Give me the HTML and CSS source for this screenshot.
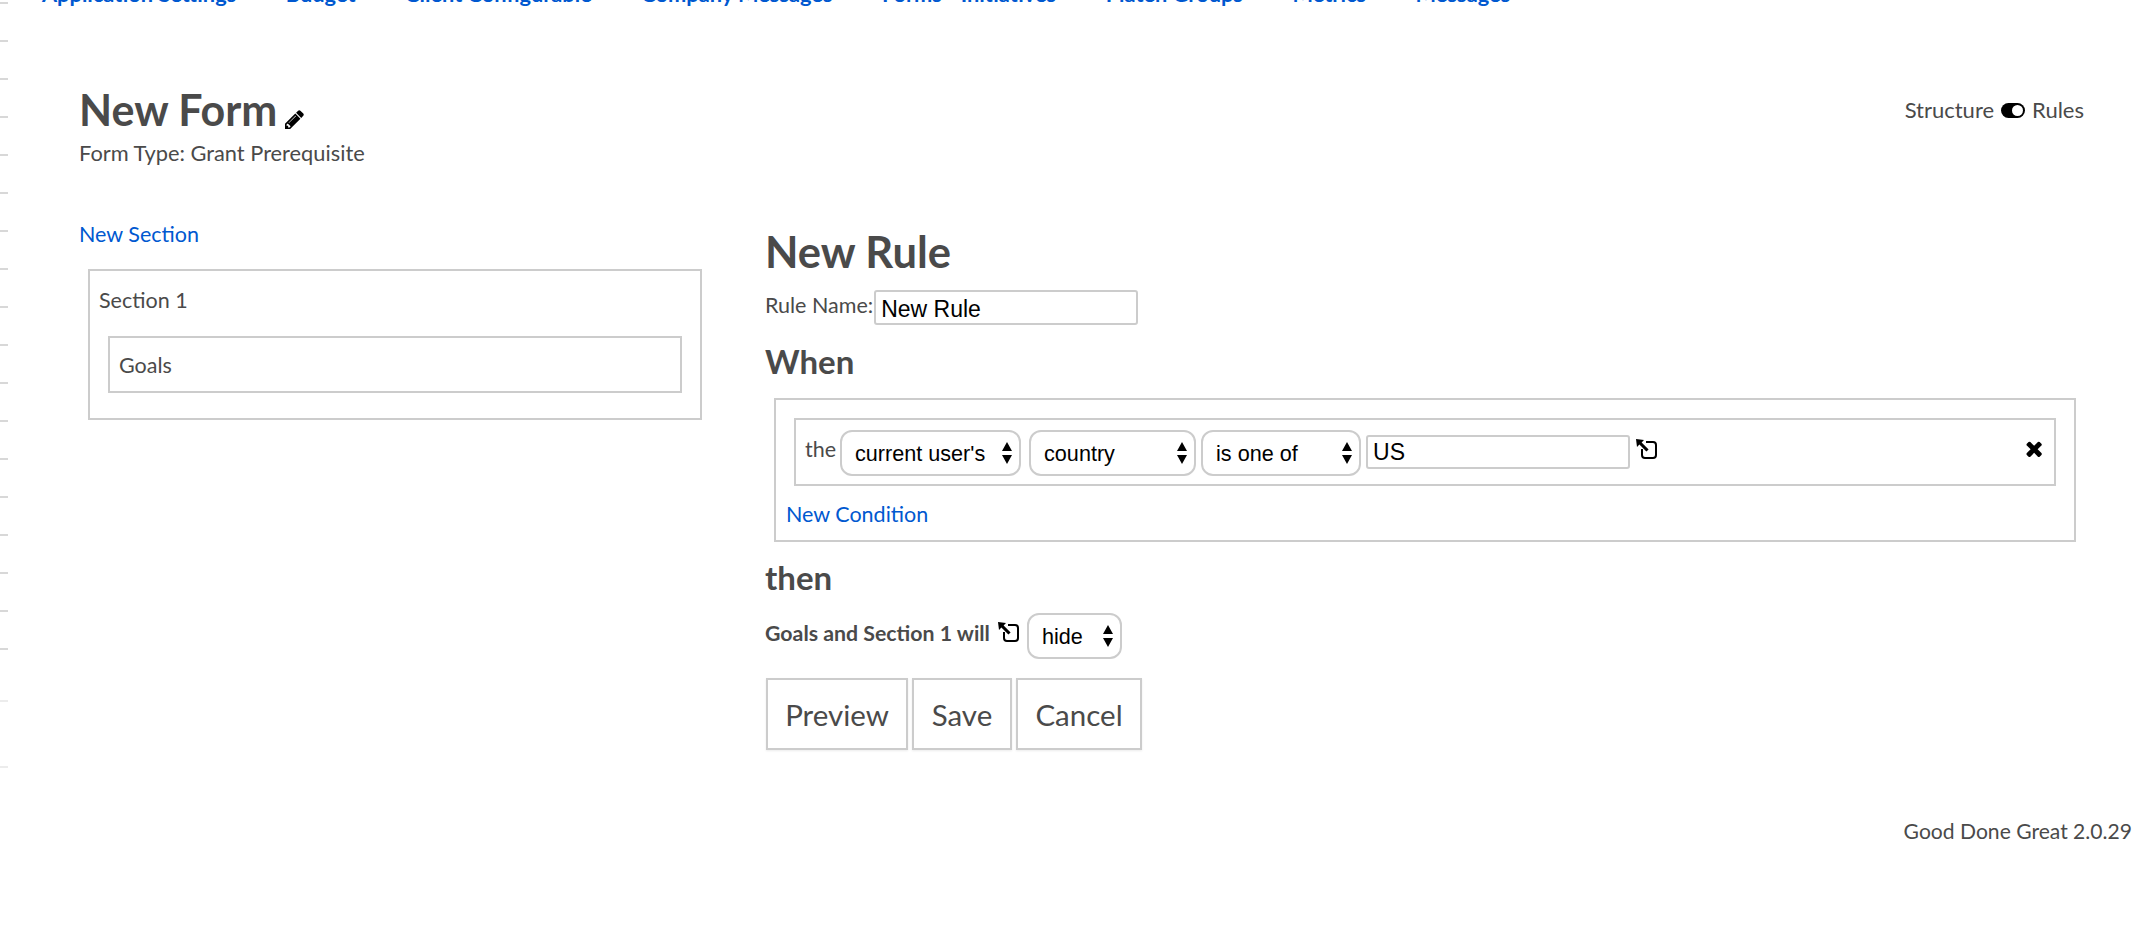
FILE: index.html
```html
<!DOCTYPE html>
<html lang="en">
<head>
    <meta charset="UTF-8">
    <title>New Form</title>
    <link rel="stylesheet" href="styles.css">
</head>
<body>

<div class="page">
    <!-- tick marks down the left edge -->
    <div class="rail">
        <div class="tick"></div><div class="tick"></div><div class="tick"></div><div class="tick"></div>
        <div class="tick"></div><div class="tick"></div><div class="tick"></div><div class="tick"></div>
        <div class="tick"></div><div class="tick"></div><div class="tick"></div><div class="tick"></div>
        <div class="tick"></div><div class="tick"></div><div class="tick"></div><div class="tick"></div>
        <div class="tick"></div>
        <div class="tick tick-last"></div>
        <div class="tick tick-faint"></div>
        <div class="tick tick-faint tick-far"></div>
    </div>

    <div class="main">
        <nav class="nav">
            <a href="#">Application Settings</a>
            <a href="#">Budget</a>
            <a href="#">Client Configurable</a>
            <a href="#">Company Messages</a>
            <a href="#">Forms - Initiatives</a>
            <a href="#">Platen Groups</a>
            <a href="#">Metrics</a>
            <a href="#">Messages</a>
        </nav>

        <header class="form-header">
            <div>
                <h1 class="form-title">New Form
                    <svg class="icon-pencil" viewBox="128 128 1536 1536"><path d="M491 1536l91-91-235-235-91 91v107h128v128h107zm523-928q0-22-22-22-10 0-17 7l-542 542q-7 7-7 17 0 22 22 22 10 0 17-7l542-542q7-7 7-17zm-54-192l416 416-832 832h-416v-416zm683 96q0 53-37 90l-166 166-416-416 166-165q36-38 90-38 53 0 91 38l235 234q37 39 37 91z"/></svg>
                </h1>
                <div class="form-type">Form Type: Grant Prerequisite</div>
            </div>
            <div class="view-toggle">
                <span>Structure</span>
                <svg class="icon-toggle" viewBox="0 0 24 15"><rect width="24" height="15" rx="7.5"/><circle cx="16.5" cy="7.5" r="5.5" fill="#fff"/></svg>
                <span>Rules</span>
            </div>
        </header>

        <div class="columns">
            <aside class="structure">
                <a class="link" href="#">New Section</a>
                <div class="section-box">
                    <div class="section-name">Section 1</div>
                    <div class="question-box">Goals</div>
                </div>
            </aside>

            <section class="rule">
                <h2 class="rule-title">New Rule</h2>
                <div class="rule-name">
                    <label>Rule Name:</label>
                    <input class="text-input name-input" type="text" value="New Rule">
                </div>

                <h3 class="rule-heading when-heading">When</h3>
                <div class="conditions">
                    <div class="condition">
                        <span class="the">the</span>
                        <div class="select-wrap sel-user">
                            <select><option>current user's</option></select>
                            <svg class="arrows" viewBox="0 0 10 22"><path d="M5 0l5 9H0zM5 22l-5-9h10z"/></svg>
                        </div>
                        <div class="select-wrap sel-field">
                            <select><option>country</option></select>
                            <svg class="arrows" viewBox="0 0 10 22"><path d="M5 0l5 9H0zM5 22l-5-9h10z"/></svg>
                        </div>
                        <div class="select-wrap sel-op">
                            <select><option>is one of</option></select>
                            <svg class="arrows" viewBox="0 0 10 22"><path d="M5 0l5 9H0zM5 22l-5-9h10z"/></svg>
                        </div>
                        <input class="text-input value-input" type="text" value="US">
                        <svg class="icon-link" viewBox="0 0 21 20"><path d="M10 3h7a3 3 0 0 1 3 3v10a3 3 0 0 1-3 3H9a3 3 0 0 1-3-3v-6" fill="none" stroke="#000" stroke-width="2"/><path d="M0 0l8 1-2.4 2.4 7 7-2.2 2.2-7-7L1 8z"/></svg>
                        <svg class="icon-remove" viewBox="282 238 1208 1316"><path d="M1490 1322q0 40-28 68l-136 136q-28 28-68 28t-68-28l-294-294-294 294q-28 28-68 28t-68-28l-136-136q-28-28-28-68t28-68l294-294-294-294q-28-28-28-68t28-68l136-136q28-28 68-28t68 28l294 294 294-294q28-28 68-28t68 28l136 136q28 28 28 68t-28 68l-294 294 294 294q28 28 28 68z"/></svg>
                    </div>
                    <a class="link" href="#">New Condition</a>
                </div>

                <h3 class="rule-heading then-heading">then</h3>
                <div class="action">
                    <strong>Goals and Section 1 will</strong>
                    <svg class="icon-link" viewBox="0 0 21 20"><path d="M10 3h7a3 3 0 0 1 3 3v10a3 3 0 0 1-3 3H9a3 3 0 0 1-3-3v-6" fill="none" stroke="#000" stroke-width="2"/><path d="M0 0l8 1-2.4 2.4 7 7-2.2 2.2-7-7L1 8z"/></svg>
                    <div class="select-wrap sel-action">
                        <select><option>hide</option></select>
                        <svg class="arrows" viewBox="0 0 10 22"><path d="M5 0l5 9H0zM5 22l-5-9h10z"/></svg>
                    </div>
                </div>

                <div class="buttons">
                    <button class="button btn-preview">Preview</button>
                    <button class="button btn-save">Save</button>
                    <button class="button btn-cancel">Cancel</button>
                </div>
            </section>
        </div>

        <footer class="footer">Good Done Great 2.0.29</footer>
    </div>
</div>

</body>
</html>
```

FILE: styles.css
```css
body {
    font-family: 'Lato', sans-serif;
    font-size: 21.5px;
    color: #4a4a4a;
    background-color: #fff;
    margin: 0;
    padding: 0;
    overflow: hidden;
}

a {
    color: #0058d0;
    text-decoration: none;
}

.page {
    display: flex;
    height: 932px;
}

.rail {
    width: 8px;
    flex: none;
    padding-top: 2px;
}

.tick {
    height: 2px;
    margin-bottom: 36px;
    background-color: #d8d8d8;
}

.tick-last {
    margin-bottom: 50px;
}

.tick-faint {
    margin-bottom: 64px;
    background-color: #ececec;
}

.main {
    flex: 1;
    min-width: 0;
}

.nav {
    display: flex;
    gap: 49.5px;
    margin-top: -19px;
    padding-left: 34px;
    font-weight: 700;
    font-size: 21.8px;
    line-height: 26px;
}

.form-header {
    display: flex;
    justify-content: space-between;
    align-items: flex-start;
    margin-top: 75px;
    padding-left: 71px;
    padding-right: 48px;
}

.form-title {
    margin: 0;
    font-size: 43px;
    line-height: 56px;
    font-weight: 700;
}

.icon-pencil {
    width: 19px;
    height: 19px;
    margin-left: -3px;
    vertical-align: -3px;
}

.form-type {
    margin-top: 1px;
    font-size: 21.8px;
    line-height: 28px;
}

.view-toggle {
    display: flex;
    align-items: center;
    gap: 7px;
    margin-top: 14px;
    font-size: 22px;
    line-height: 28px;
}

.icon-toggle {
    width: 24px;
    height: 15px;
}

.columns {
    display: flex;
    padding-left: 71px;
}

.structure {
    width: 623px;
    margin-top: 53px;
    flex: none;
}

.link {
    display: block;
    line-height: 28px;
}

.section-box {
    margin-top: 21px;
    margin-left: 9px;
    height: 151px;
    box-sizing: border-box;
    border: 2px solid #ccc;
    padding: 15px 18px 0 9px;
}

.section-name {
    line-height: 28px;
}

.question-box {
    margin-top: 22px;
    margin-left: 9px;
    height: 57px;
    box-sizing: border-box;
    border: 2px solid #ccc;
    padding: 13px 9px;
    line-height: 28px;
}

.rule {
    margin-left: 63px;
    margin-top: 56px;
    width: 1311px;
    flex: none;
}

.rule-title {
    margin: 0;
    font-size: 43.5px;
    line-height: 56px;
    font-weight: 700;
}

.rule-name {
    display: flex;
    align-items: flex-start;
    margin-top: 11px;
}

.rule-name label {
    line-height: 28px;
    margin-top: 1px;
}

.text-input {
    font-family: 'Liberation Sans', sans-serif;
    font-size: 23px;
    color: #000;
    border: 2px solid #ccc;
    border-radius: 3px;
    box-sizing: border-box;
    padding: 0 5px;
    outline: none;
}

.name-input {
    width: 264px;
    height: 35px;
    margin-left: 1px;
    padding-top: 3px;
}

.rule-heading {
    margin: 0;
    font-size: 33px;
    font-weight: 700;
    line-height: 42px;
}

.when-heading {
    margin-top: 15px;
}

.conditions {
    margin-top: 16px;
    margin-left: 9px;
    height: 144px;
    box-sizing: border-box;
    border: 2px solid #ccc;
    padding: 18px 18px 0 10px;
}

.condition {
    display: flex;
    align-items: flex-start;
    height: 68px;
    box-sizing: border-box;
    border: 2px solid #ccc;
    padding: 10px 12px 0 9px;
    margin-left: 8px;
    position: relative;
}

.the {
    line-height: 28px;
    margin-top: 5px;
    margin-right: 4px;
}

.select-wrap {
    position: relative;
    margin-right: 6px;
}

.select-wrap select {
    display: block;
    appearance: none;
    -webkit-appearance: none;
    width: 100%;
    height: 46px;
    box-sizing: border-box;
    background-color: #fff;
    border: 2px solid #ccc;
    border-radius: 12px;
    padding: 0 0 0 13px;
    font-family: 'Liberation Sans', sans-serif;
    font-size: 21.6px;
    color: #000;
    outline: none;
}

.arrows {
    position: absolute;
    right: 9px;
    top: 12px;
    width: 10px;
    height: 22px;
}

.sel-user {
    width: 181px;
    margin-right: 8px;
}

.sel-field {
    width: 167px;
    margin-right: 5px;
}

.sel-op {
    width: 160px;
    margin-right: 5px;
}

.sel-action {
    width: 95px;
    margin-right: 0;
    margin-left: 8px;
}

.value-input {
    width: 264px;
    height: 34px;
    margin-top: 5px;
}

.icon-link {
    width: 21px;
    height: 20px;
    flex: none;
}

.condition .icon-link {
    margin-top: 9px;
    margin-left: 6px;
}

.icon-remove {
    width: 16px;
    height: 17px;
    margin-top: 10px;
    margin-left: auto;
}

.conditions .link {
    margin-top: 14px;
}

.then-heading {
    margin-top: 14px;
}

.action {
    display: flex;
    align-items: flex-start;
    margin-top: 15px;
}

.action strong {
    line-height: 28px;
    font-size: 21.3px;
    margin-top: 6px;
}

.action .icon-link {
    margin-left: 8px;
    margin-top: 9px;
}

.buttons {
    display: flex;
    gap: 4px;
    margin-top: 19px;
    margin-left: 1px;
}

.button {
    height: 72px;
    box-sizing: border-box;
    border: 2px solid #ccc;
    background-color: #fff;
    padding: 0;
    font-family: 'Lato', sans-serif;
    font-size: 29.5px;
    color: #4a4a4a;
    box-shadow: 0 1px 2px rgba(0, 0, 0, 0.08);
}

.btn-preview {
    width: 142px;
}

.btn-save {
    width: 100px;
}

.btn-cancel {
    width: 126px;
}

.footer {
    margin-top: 67px;
    font-size: 21.1px;
    text-align: right;
    line-height: 28px;
}
```
